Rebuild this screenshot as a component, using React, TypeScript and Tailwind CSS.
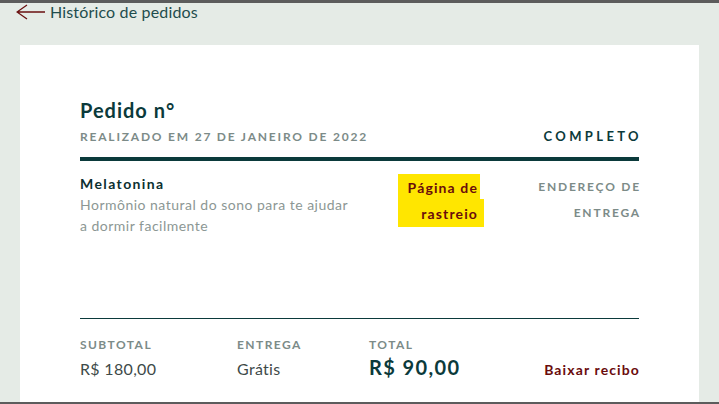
const App = () => {
  return (
    <div className="w-[719px] h-[404px] overflow-hidden bg-[#e5ebe6] border-t-[3px] border-b-2 border-[#5c5c5c] flex flex-col font-['Lato',sans-serif]">
      {/* back link */}
      <div className="h-[18px] flex items-center">
        <svg width="30" height="16" viewBox="0 0 30 16" className="ml-[16px]">
          <path d="M29 8H1M11 1L1 8l10 7" fill="none" stroke="#6a1010" strokeWidth="1.3" />
        </svg>
        <span className="ml-[4px] text-[16px] leading-[18px] tracking-[0.01em] text-[#1f4d4d]">Histórico de pedidos</span>
      </div>

      {/* card */}
      <div className="flex-1 mx-[20px] mt-[24px] bg-white px-[60px] pt-[53px]">
        <h1 className="text-[20px] leading-6 font-bold tracking-[0.05em] text-[#0b3a3b]">Pedido n°</h1>
        <div className="mt-[6px] flex items-baseline justify-between">
          <span className="text-[12px] leading-4 font-bold tracking-[0.15em] text-[#7c8b88]">
            REALIZADO EM 27 DE JANEIRO DE 2022
          </span>
          <span className="text-[13px] leading-4 font-bold tracking-[0.26em] text-[#0b3a3b] -mr-[3px]">COMPLETO</span>
        </div>
        <div className="mt-[12px] h-[4px] bg-[#0b3a3b]" />

        <div className="h-[157px] pt-[13px] flex">
          <div className="flex-1">
            <div className="text-[14px] leading-5 font-bold tracking-[0.1em] text-[#0b2f30]">Melatonina</div>
            <p className="w-[275px] text-[14px] leading-[21px] tracking-[0.035em] text-[#8c9794]">
              Hormônio natural do sono para te ajudar a dormir facilmente
            </p>
          </div>
          <div className="w-[86px] text-right text-[14px] font-bold tracking-[0.08em] text-[#6a0c0c]">
            <div className="w-[82px] h-[25px] bg-[#ffe600] pr-[2px] leading-[27px]">Página de</div>
            <div className="h-[28px] bg-[#ffe600] pr-[6px] leading-[30px]">rastreio</div>
          </div>
          <div className="ml-[37px] w-[120px] text-right text-[12px] leading-[26px] font-bold tracking-[0.15em] text-[#7c8b88] -mr-[2px]">
            ENDEREÇO DE ENTREGA
          </div>
        </div>
        <div className="h-px bg-[#0b3a3b]" />

        <div className="mt-[18px] flex text-[12px] leading-4 font-bold tracking-[0.12em] text-[#7c8b88]">
          <span className="w-[157px]">SUBTOTAL</span>
          <span className="w-[132px]">ENTREGA</span>
          <span>TOTAL</span>
        </div>
        <div className="mt-[2px] flex items-baseline">
          <span className="w-[157px] text-[16px] leading-6 tracking-[0.02em] text-[#3e4a49]">R$ 180,00</span>
          <span className="w-[132px] text-[16px] leading-6 tracking-[0.02em] text-[#3e4a49]">Grátis</span>
          <span className="text-[20px] leading-6 font-bold text-[#0b3a3b] tracking-[0.07em]">R$ 90,00</span>
          <span className="ml-auto text-[14px] font-bold tracking-[0.08em] text-[#6a0c0c] -mr-[1px]">Baixar recibo</span>
        </div>
      </div>
    </div>
  );
};

export default App;
